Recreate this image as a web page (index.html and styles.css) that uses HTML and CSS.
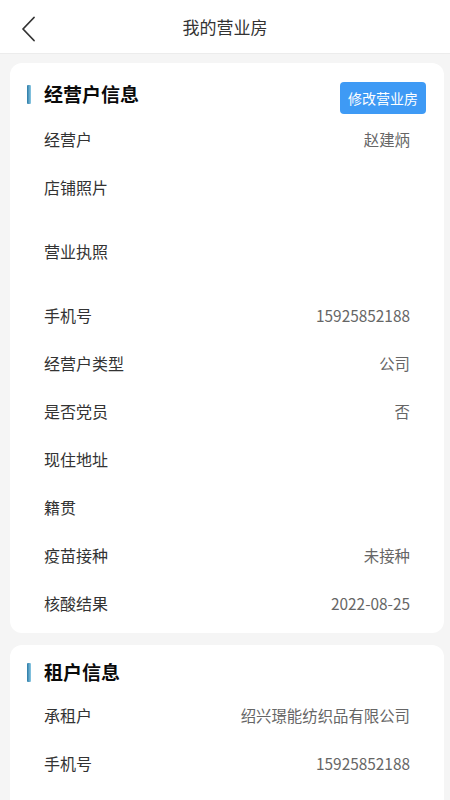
FILE: index.html
```html
<!DOCTYPE html>
<html lang="zh-CN">
<head>
<meta charset="utf-8">
<title>我的营业房</title>
<link rel="stylesheet" href="styles.css">
</head>
<body>
<header class="nav">
  <span class="back">
    <svg width="16" height="26" viewBox="0 0 16 26"><path d="M13 1.5 L2 13 L13 24.5" fill="none" stroke="#333" stroke-width="1.8" stroke-linecap="round" stroke-linejoin="round"/></svg>
  </span>
  <h1 class="nav-title">我的营业房</h1>
</header>
<main class="content">
  <section class="card owner">
    <div class="card-head">
      <h2 class="card-title"><span class="bar"></span>经营户信息</h2>
      <button class="edit-btn">修改营业房</button>
    </div>
    <div class="row"><span class="label">经营户</span><span class="value">赵建炳</span></div>
    <div class="row"><span class="label">店铺照片</span><span class="value"></span></div>
    <div class="photos"></div>
    <div class="row"><span class="label">营业执照</span><span class="value"></span></div>
    <div class="photos"></div>
    <div class="row"><span class="label">手机号</span><span class="value">15925852188</span></div>
    <div class="row"><span class="label">经营户类型</span><span class="value">公司</span></div>
    <div class="row"><span class="label">是否党员</span><span class="value">否</span></div>
    <div class="row"><span class="label">现住地址</span><span class="value"></span></div>
    <div class="row"><span class="label">籍贯</span><span class="value"></span></div>
    <div class="row"><span class="label">疫苗接种</span><span class="value">未接种</span></div>
    <div class="row"><span class="label">核酸结果</span><span class="value">2022-08-25</span></div>
  </section>
  <section class="card tenant">
    <div class="card-head">
      <h2 class="card-title"><span class="bar"></span>租户信息</h2>
    </div>
    <div class="row"><span class="label">承租户</span><span class="value">绍兴璟能纺织品有限公司</span></div>
    <div class="row"><span class="label">手机号</span><span class="value">15925852188</span></div>
  </section>
</main>
</body>
</html>
```
FILE: styles.css
```css
* { box-sizing: border-box; }
html, body { margin: 0; padding: 0; }
body {
  width: 450px;
  height: 800px;
  overflow: hidden;
  background: #f5f5f5;
  font-family: "Noto Sans CJK SC", "Noto Sans", sans-serif;
  color: #333;
}
.nav {
  height: 54px;
  background: #fff;
  border-bottom: 1px solid #ececec;
  display: flex;
  align-items: center;
  justify-content: center;
  position: relative;
}
.back {
  position: absolute;
  left: 21px;
  top: 16px;
  width: 16px;
  height: 26px;
  display: block;
}
.back svg { display: block; }
.nav-title {
  margin: 0;
  font-size: 17px;
  font-weight: 400;
  line-height: 24px;
  color: #333;
  padding-top: 1px;
}
.content {
  padding: 9px 6px 0 10px;
  display: flex;
  flex-direction: column;
  gap: 12px;
}
.card {
  background: #fff;
  border-radius: 12px;
  padding: 19px 18px 6px 17px;
}
.card.tenant { padding-top: 15px; padding-bottom: 24px; }
.card-head {
  display: flex;
  justify-content: space-between;
  align-items: flex-start;
  height: 33px;
}
.tenant .card-head { height: 31px; }
.card-title {
  margin: 0;
  display: flex;
  align-items: center;
  font-size: 19px;
  font-weight: 700;
  line-height: 24px;
  color: #0a0a0a;
}
.bar {
  width: 4px;
  height: 19px;
  margin-right: 13px;
  background: linear-gradient(to right, #2a7aa6, #8cc9e4);
  border-radius: 1px;
}
.edit-btn {
  width: 86px;
  height: 32px;
  border: none;
  border-radius: 4px;
  background: #3e9af5;
  color: #fff;
  font-family: inherit;
  font-size: 14px;
  padding: 0;
  line-height: 32px;
}
.row {
  height: 48px;
  display: flex;
  align-items: center;
  justify-content: space-between;
  padding: 0 16px 0 17px;
}
.label {
  font-size: 16px;
  color: #333;
}
.value {
  font-size: 15.4px;
  color: #666;
}
.photos { height: 16px; }
```
